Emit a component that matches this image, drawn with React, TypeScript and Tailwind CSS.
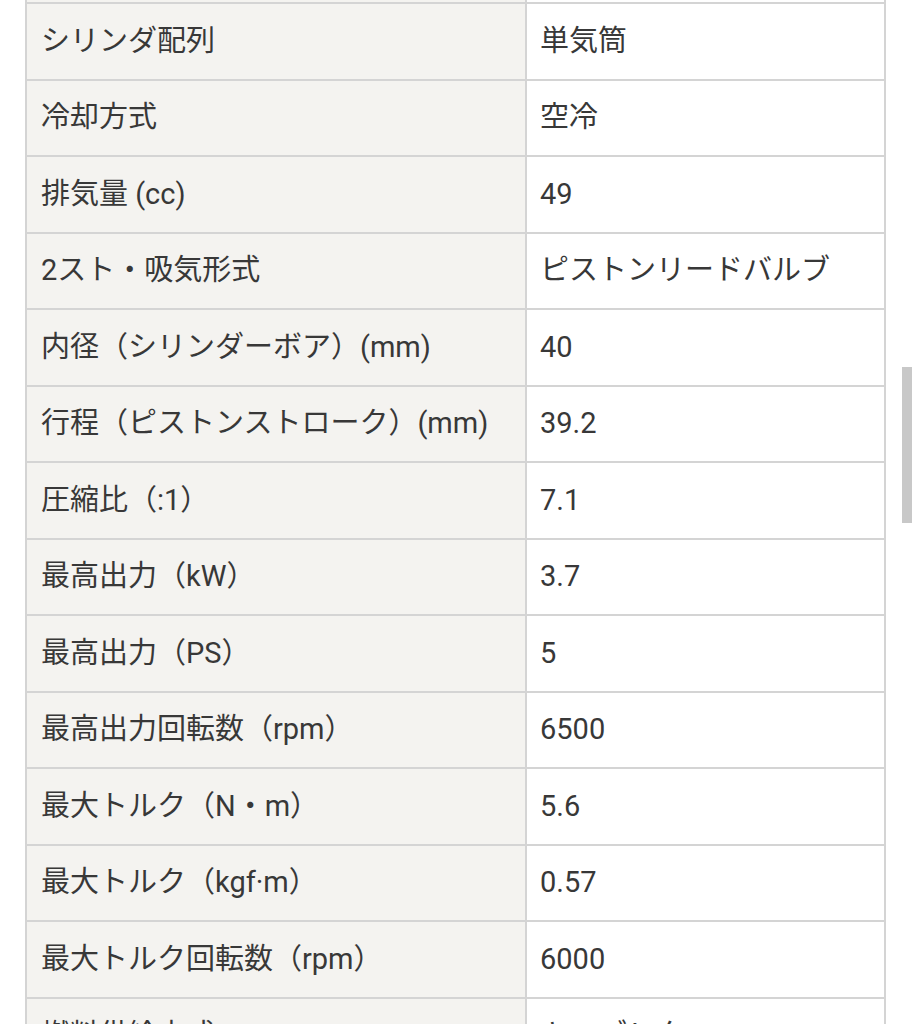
import React from 'react';

type Spec = { label: string; value: string };

const specs: Spec[] = [
    { label: 'シリンダ配列', value: '単気筒' },
    { label: '冷却方式', value: '空冷' },
    { label: '排気量 (cc)', value: '49' },
    { label: '2スト・吸気形式', value: 'ピストンリードバルブ' },
    { label: '内径（シリンダーボア）(mm)', value: '40' },
    { label: '行程（ピストンストローク）(mm)', value: '39.2' },
    { label: '圧縮比（:1）', value: '7.1' },
    { label: '最高出力（kW）', value: '3.7' },
    { label: '最高出力（PS）', value: '5' },
    { label: '最高出力回転数（rpm）', value: '6500' },
    { label: '最大トルク（N・m）', value: '5.6' },
    { label: '最大トルク（kgf·m）', value: '0.57' },
    { label: '最大トルク回転数（rpm）', value: '6000' },
    { label: '燃料供給方式', value: 'キャブレター' },
];

const SpecRow: React.FC<{ spec: Spec }> = ({ spec }) => (
    <div className="grid grid-cols-[500px_1fr] h-[76.5px] shrink-0 border-b-2 border-[#d4d4d4]">
        <div className="flex items-center bg-[#f4f3f0] border-r-2 border-[#d4d4d4] pl-[14px] whitespace-nowrap">
            {spec.label}
        </div>
        <div className="flex items-center bg-white pl-[13px] whitespace-nowrap">{spec.value}</div>
    </div>
);

export default function App() {
    return (
        <div
            className="relative w-[912px] h-[1024px] overflow-hidden bg-white text-[29px] text-[#383838]"
            style={{ fontFamily: 'Roboto, "Noto Sans CJK JP", sans-serif' }}
        >
            <div className="ml-[25px] w-[861px] flex flex-col border-x-2 border-[#d4d4d4]">
                <div className="grid grid-cols-[500px_1fr] h-[4px] shrink-0 border-b-2 border-[#d4d4d4]">
                    <div className="bg-[#f4f3f0] border-r-2 border-[#d4d4d4]" />
                    <div className="bg-white" />
                </div>
                {specs.map(spec => (
                    <SpecRow key={spec.label} spec={spec} />
                ))}
            </div>
            {/* scroll thumb */}
            <div className="absolute right-0 top-[367px] w-[10px] h-[156px] bg-[#c8c8c8]" />
        </div>
    );
}
